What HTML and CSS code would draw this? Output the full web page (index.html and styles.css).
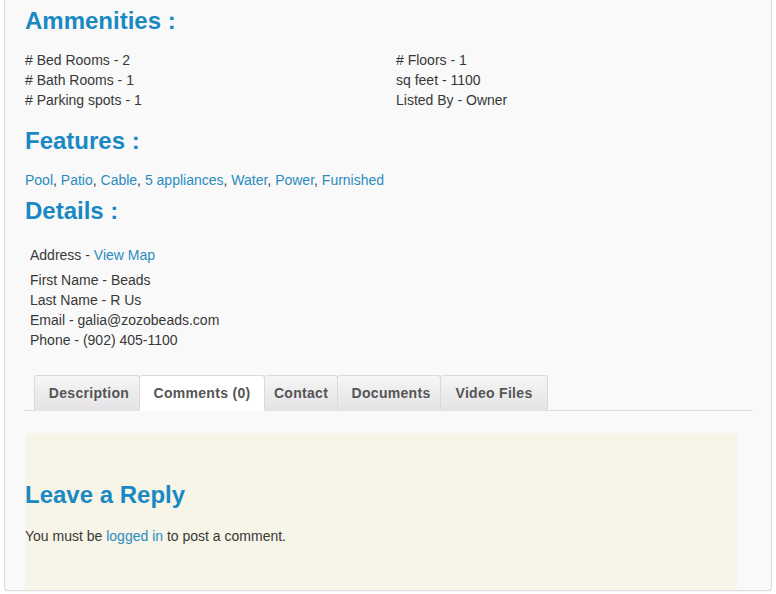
FILE: index.html
```html
<!DOCTYPE html>
<html>
<head>
<meta charset="utf-8">
<link rel="stylesheet" href="styles.css">
</head>
<body>
<div class="panel">
  <h2 class="heading h-amen">Ammenities :</h2>
  <div class="amen">
    <div class="col">
      <div># Bed Rooms - 2</div>
      <div># Bath Rooms - 1</div>
      <div># Parking spots - 1</div>
    </div>
    <div class="col">
      <div># Floors - 1</div>
      <div>sq feet - 1100</div>
      <div>Listed By - Owner</div>
    </div>
  </div>
  <h2 class="heading h-feat">Features :</h2>
  <div class="features"><a href="#">Pool</a>, <a href="#">Patio</a>, <a href="#">Cable</a>, <a href="#">5 appliances</a>, <a href="#">Water</a>, <a href="#">Power</a>, <a href="#">Furnished</a></div>
  <h2 class="heading h-det">Details :</h2>
  <div class="details">
    <div class="addr">Address - <a href="#">View Map</a></div>
    <div>First Name - Beads</div>
    <div>Last Name - R Us</div>
    <div>Email - galia@zozobeads.com</div>
    <div>Phone - (902) 405-1100</div>
  </div>
  <div class="tabs">
    <div class="tab t1">Description</div>
    <div class="tab t2 active">Comments (0)</div>
    <div class="tab t3">Contact</div>
    <div class="tab t4">Documents</div>
    <div class="tab t5">Video Files</div>
  </div>
  <div class="comments">
    <h2 class="heading h-reply">Leave a Reply</h2>
    <p class="must">You must be <a href="#">logged in</a> to post a comment.</p>
  </div>
</div>
</body>
</html>
```
FILE: styles.css
```css
html, body {
  margin: 0;
  padding: 0;
  background: #ffffff;
}
body {
  font-family: "Liberation Sans", Arial, sans-serif;
  font-size: 14px;
  line-height: 20px;
  color: #383838;
}
a {
  color: #2a8cc0;
  text-decoration: none;
}
.panel {
  margin: 0 4px 3px 4px;
  border: 1px solid #dcdcdc;
  border-top: none;
  border-radius: 0 0 4px 4px;
  background: #f9f9f9;
  padding: 0 18px 0 20px;
  box-shadow: 0 1px 1px rgba(0,0,0,0.04);
}
.heading {
  margin: 0;
  font-size: 24px;
  line-height: 28px;
  font-weight: bold;
  color: #1a89c3;
}
.h-amen { padding-top: 7px; }
.amen {
  display: grid;
  grid-template-columns: 371px 1fr;
  margin-top: 15px;
}
.h-feat { margin-top: 17px; }
.features { margin-top: 15px; }
.h-det { margin-top: 7px; }
.details {
  margin-top: 20px;
  padding-left: 5px;
}
.details .addr { margin-bottom: 5px; }
.tabs {
  display: flex;
  margin-top: 25px;
  padding-left: 10px;
  margin-left: -1px;
  border-bottom: 1px solid #dddddd;
  height: 35px;
}
.tab {
  box-sizing: border-box;
  height: 36px;
  border: 1px solid #dadada;
  border-bottom: none;
  border-radius: 3px 3px 0 0;
  background: linear-gradient(#f6f6f6, #e4e2e4);
  font-size: 14px;
  font-weight: bold;
  letter-spacing: 0.3px;
  color: #555555;
  line-height: 34px;
  text-align: center;
  margin-right: -1px;
}
.t1 { width: 106px; padding-left: 4px; }
.t2 { width: 126px; }
.t3 { width: 74px; }
.t4 { width: 104px; padding-left: 4px; }
.t5 { width: 108px; }
.tab.active {
  background: #ffffff;
  position: relative;
  z-index: 1;
}
.comments {
  margin-top: 22px;
  margin-right: 16px;
  background: #f7f4e8;
  padding: 48px 0 44px 0;
}
.must {
  margin: 17px 0 0 0;
}
```
